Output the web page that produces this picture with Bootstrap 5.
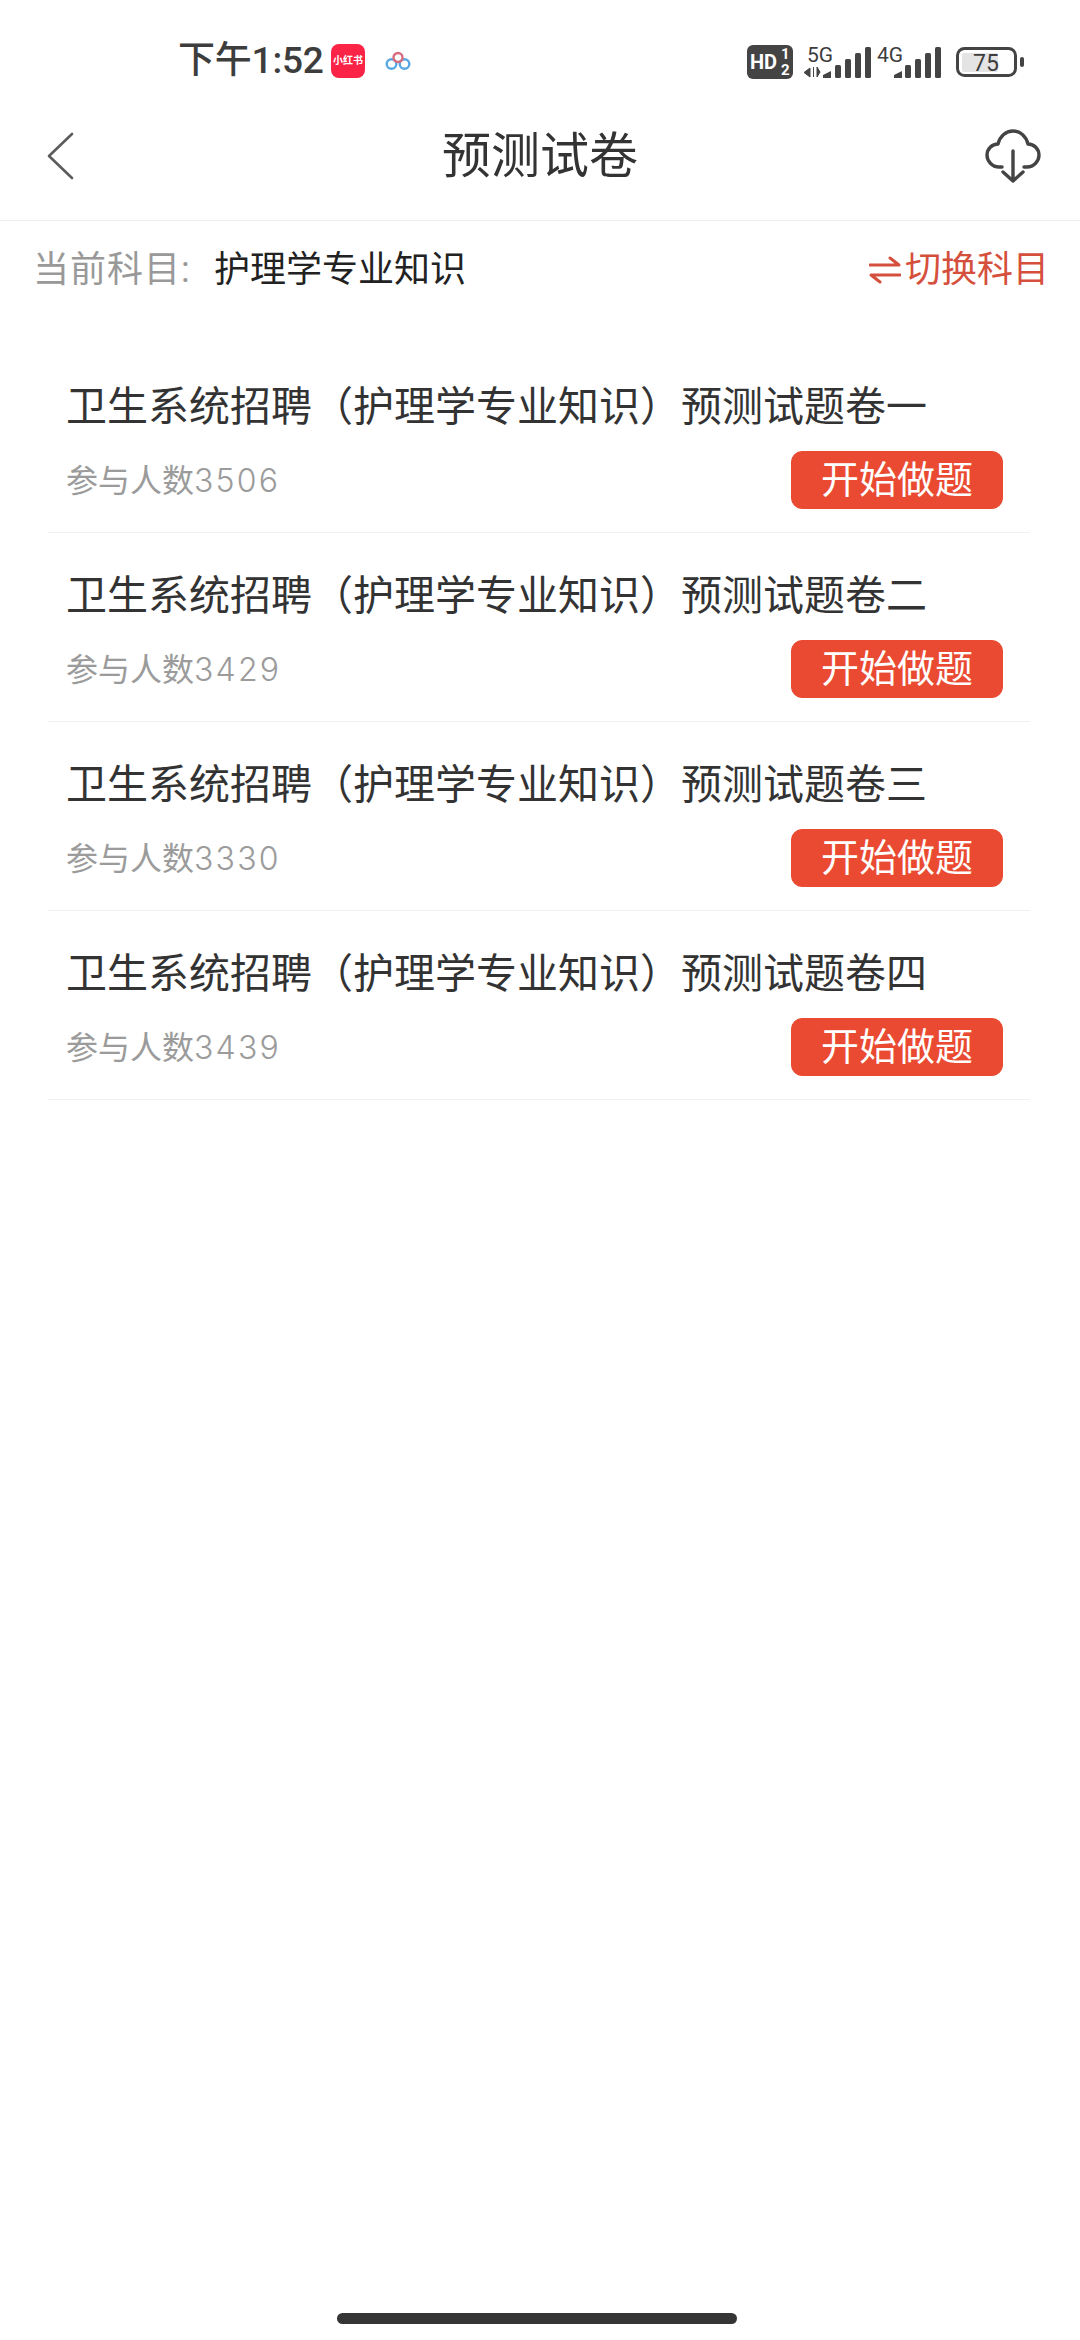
<!DOCTYPE html>
<html lang="zh-CN">
<head>
<meta charset="utf-8">
<title>预测试卷</title>
<link rel="stylesheet" href="https://cdn.jsdelivr.net/npm/bootstrap@5.3.0/dist/css/bootstrap.min.css">
<style>
html,body{margin:0;width:1080px;height:2340px;background:#fff;overflow:hidden}
body{font-family:"Roboto","Noto Sans CJK SC",sans-serif;position:relative}
.sbar{height:62px;margin-top:30px;padding:0 50px 0 178px;color:#3d3d3d}
.sbar-time{font-size:37px;line-height:62px;width:150px;white-space:nowrap;letter-spacing:-.2px;font-weight:500}
.sbar-app{width:34px;height:34px;border-radius:8px;background:#fb2447;color:#fff;font-size:10px;font-weight:700;line-height:34px;text-align:center;margin-left:3px;white-space:nowrap}
.sbar-cloud{margin-left:20px}
.tbar{height:129px;border-bottom:1px solid #ececec;padding:0 39px 0 46px}
.tbar-title{font-size:49px;color:#333;line-height:1;position:absolute;left:0;right:0;text-align:center;pointer-events:none}
.subj{height:123px;padding:0 31px 25px 33px}
.subj-label{font-size:36px;color:#999;width:181px;white-space:nowrap;letter-spacing:1px}
.subj-name{font-size:36px;color:#222}
.subj-switch{font-size:36px;color:#d5503c;white-space:nowrap}
.plist{margin:0 50px 0 48px;border-radius:0}
.pitem{height:189px;padding:35px 27px 0 18px;border:0;border-bottom:1px solid #f0f0f0;border-radius:0!important}
.pitem-title{font-size:41px;line-height:56px;color:#333;white-space:nowrap;margin:0;font-weight:400}
.pitem-row{margin-top:14px}
.pitem-count{font-size:32px;color:#9b9b9b;line-height:58px;font-family:"Noto Sans CJK SC",sans-serif}
.pitem-num{font-family:"Inter",sans-serif;letter-spacing:2.2px;font-weight:300}
.pitem-btn{width:212px;height:58px;padding:0;background:#ea4a31;border-color:#ea4a31;color:#fff;font-size:38px;line-height:56px;border-radius:11px;white-space:nowrap}
.hbar{position:absolute;left:337px;top:2313px;width:400px;height:11px;border-radius:6px;background:#353535}
</style>
</head>
<body>
<div class="sbar d-flex align-items-center">
  <div class="sbar-time">下午1:52</div>
  <div class="sbar-app">小红书</div>
  <svg class="sbar-cloud" width="26" height="20" viewBox="0 0 26 20" fill="none">
    <circle cx="6.5" cy="13" r="4.8" stroke="#58a8e4" stroke-width="2.4"/>
    <circle cx="19.5" cy="13" r="4.8" stroke="#58a8e4" stroke-width="2.4"/>
    <circle cx="13" cy="6.5" r="4.5" stroke="#d96a7c" stroke-width="2.4"/>
  </svg>
  <div class="ms-auto d-flex align-items-center">
    <svg width="283" height="38" viewBox="-3 -1 283 38">
      <rect x="-3" y="2" width="46" height="34" rx="6" fill="#444"/>
      <text x="0" y="26" font-family="Roboto,sans-serif" font-size="20" font-weight="700" fill="#fff">HD</text>
      <text x="31" y="16" font-family="Roboto,sans-serif" font-size="15" font-weight="700" fill="#fff">1</text>
      <text x="31" y="32" font-family="Roboto,sans-serif" font-size="15" font-weight="700" fill="#fff">2</text>
      <text x="57" y="19" font-family="Roboto,sans-serif" font-size="21" fill="#3d3d3d">5G</text>
      <path d="M60 25v9l-6-4.500zM63.500 24v10M67 24v10l3-5z" fill="#444" stroke="#444" stroke-width="1"/>
      <g fill="#444">
        <path d="M73 35v-3l8-4v7z"/><rect x="85" y="22" width="6" height="13" rx="1.500"/><rect x="95" y="16" width="6" height="19" rx="1.500"/><rect x="105" y="10" width="6" height="25" rx="1.500"/><rect x="115" y="4" width="6" height="31" rx="1.500"/>
      </g>
      <text x="127" y="19" font-family="Roboto,sans-serif" font-size="21" fill="#3d3d3d">4G</text>
      <g fill="#444">
        <path d="M144 35v-3l8-4v7z"/><rect x="155" y="22" width="6" height="13" rx="1.500"/><rect x="165" y="16" width="6" height="19" rx="1.500"/><rect x="175" y="10" width="6" height="25" rx="1.500"/><rect x="185" y="4" width="6" height="31" rx="1.500"/>
      </g>
      <rect x="207.500" y="5.500" width="58" height="27" rx="7" fill="#fff" stroke="#444" stroke-width="3"/>
      <rect x="212" y="10" width="36" height="19" rx="2" fill="#e4e4e4"/>
      <text x="236" y="28" text-anchor="middle" font-family="Roboto,sans-serif" font-size="23" fill="#3d3d3d">75</text>
      <rect x="270" y="14" width="4" height="10" rx="2" fill="#444"/>
    </svg>
  </div>
</div>
<div class="tbar d-flex align-items-center justify-content-between">
  <svg width="28" height="48" viewBox="0 0 28 48" fill="none"><path d="M26 2 3 24l23 22" stroke="#5c5c5c" stroke-width="2.600" stroke-linecap="round" stroke-linejoin="round"/></svg>
  <div class="tbar-title">预测试卷</div>
  <svg width="56" height="54" viewBox="0 0 56 54" fill="none" stroke="#444" stroke-width="3.400" stroke-linecap="round" stroke-linejoin="round">
    <path d="M17 38H14C7 38 2 32 2 26c0-6 5-11 11-11C15 7 21 2 28 2s13 5 15 13c6 0 11 5 11 11 0 6-5 12-12 12h-3"/>
    <path d="M28 22v30M18 43l10 9 10-9"/>
  </svg>
</div>
<div class="subj d-flex align-items-center">
  <div class="subj-label">当前科目:</div>
  <div class="subj-name">护理学专业知识</div>
  <div class="subj-switch ms-auto d-flex align-items-center">
    <svg class="me-1" width="32" height="28" viewBox="0 0 32 28" fill="none" stroke="#d5503c" stroke-width="3" stroke-linecap="round" stroke-linejoin="round"><path d="M1 9h29L21 2M31 19H2l9 7"/></svg>
    <span>切换科目</span>
  </div>
</div>
<div class="list-group plist">
  <div class="list-group-item pitem">
    <h2 class="pitem-title">卫生系统招聘（护理学专业知识）预测试题卷一</h2>
    <div class="pitem-row d-flex justify-content-between align-items-center"><span class="pitem-count">参与人数<span class="pitem-num">3506</span></span><button type="button" class="btn pitem-btn">开始做题</button></div>
  </div>
  <div class="list-group-item pitem">
    <h2 class="pitem-title">卫生系统招聘（护理学专业知识）预测试题卷二</h2>
    <div class="pitem-row d-flex justify-content-between align-items-center"><span class="pitem-count">参与人数<span class="pitem-num">3429</span></span><button type="button" class="btn pitem-btn">开始做题</button></div>
  </div>
  <div class="list-group-item pitem">
    <h2 class="pitem-title">卫生系统招聘（护理学专业知识）预测试题卷三</h2>
    <div class="pitem-row d-flex justify-content-between align-items-center"><span class="pitem-count">参与人数<span class="pitem-num">3330</span></span><button type="button" class="btn pitem-btn">开始做题</button></div>
  </div>
  <div class="list-group-item pitem">
    <h2 class="pitem-title">卫生系统招聘（护理学专业知识）预测试题卷四</h2>
    <div class="pitem-row d-flex justify-content-between align-items-center"><span class="pitem-count">参与人数<span class="pitem-num">3439</span></span><button type="button" class="btn pitem-btn">开始做题</button></div>
  </div>
</div>
<div class="hbar"></div>
<script src="https://cdn.jsdelivr.net/npm/bootstrap@5.3.0/dist/js/bootstrap.bundle.min.js"></script>
</body>
</html>
